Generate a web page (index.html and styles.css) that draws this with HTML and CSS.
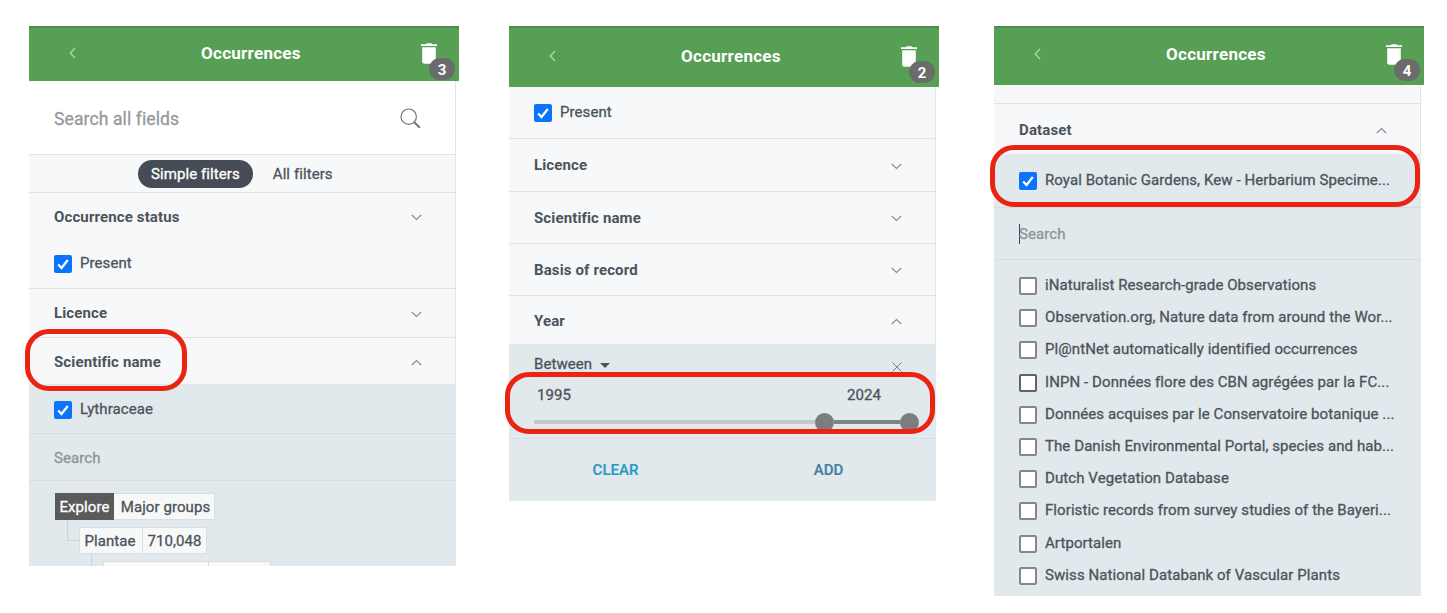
FILE: index.html
```
<!DOCTYPE html>
<html lang="en">
<head>
<meta charset="utf-8">
<title>Occurrences filters</title>
<link rel="stylesheet" href="styles.css">
</head>
<body>
<svg width="0" height="0" class="defs">
  <symbol id="trash" viewBox="0 0 16 21"><path d="M0 1.3h4.6L5.6.2h4.8l1 1.1H16v1.6H0z"/><path d="M1.2 4.3h13.6v14.2c0 1.4-.8 2.2-2.2 2.2H3.4c-1.400 0-2.200-.8-2.200-2.200z"/></symbol>
  <symbol id="back" viewBox="0 0 7 12"><path d="M6 1 1.200 6 6 11"/></symbol>
  <symbol id="down" viewBox="0 0 11 7"><path d="M.8 1l4.700 4.500L10.200 1"/></symbol>
  <symbol id="up" viewBox="0 0 11 7"><path d="M.8 6l4.700-4.500L10.200 6"/></symbol>
  <symbol id="tick" viewBox="0 0 18 18"><path d="M4.200 9.600l3.300 3.400 6.300-8"/></symbol>
</svg>
<main class="board">
  <section class="panel">
    <header class="head head-a">
      <svg class="back"><use href="#back"/></svg><h1 class="title">Occurrences</h1>
      <div class="bin"><svg class="trash"><use href="#trash"/></svg><span class="badge">3</span></div>
    </header>
    <div class="body body-a">
      <div class="search-all"><span class="t">Search all fields</span><svg class="lens" viewBox="0 0 21 21"><circle cx="8.700" cy="8.700" r="7.700"/><path class="handle" d="M14.300 14.300l5.500 5.500"/></svg></div>
      <div class="tabs"><span class="tab on"><span class="t">Simple filters</span></span><span class="tab"><span class="t">All filters</span></span></div>
      <div class="row r-status"><b>Occurrence status</b><svg class="chev"><use href="#down"/></svg></div>
      <div class="row line r-present"><i class="box on"><svg><use href="#tick"/></svg></i><span class="t">Present</span></div>
      <div class="row line r-licence"><b>Licence</b><svg class="chev"><use href="#down"/></svg></div>
      <div class="row r-sci"><b>Scientific name</b><svg class="chev"><use href="#up"/></svg></div>
      <div class="row dark line r-lyth"><i class="box on"><svg><use href="#tick"/></svg></i><span class="t">Lythraceae</span></div>
      <div class="row dark line r-find"><span class="t">Search</span></div>
      <div class="tree dark">
        <div class="node"><span class="cell explore">Explore</span><span class="cell major">Major groups</span></div>
        <div class="branch"><div class="node"><span class="cell plantae">Plantae</span><span class="cell count">710,048</span></div></div>
        <div class="branch deep"><div class="node"><span class="cell blank"></span><span class="cell blank-count"></span></div></div>
      </div>
    </div>
    <div class="ring ring-a"></div>
  </section>

  <section class="panel panel-b">
    <header class="head head-b">
      <svg class="back"><use href="#back"/></svg><h1 class="title">Occurrences</h1>
      <div class="bin"><svg class="trash"><use href="#trash"/></svg><span class="badge">2</span></div>
    </header>
    <div class="body">
      <div class="row line b-present"><i class="box on"><svg><use href="#tick"/></svg></i><span class="t">Present</span></div>
      <div class="row line b-licence"><b>Licence</b><svg class="chev"><use href="#down"/></svg></div>
      <div class="row line b-row"><b>Scientific name</b><svg class="chev"><use href="#down"/></svg></div>
      <div class="row line b-row"><b>Basis of record</b><svg class="chev"><use href="#down"/></svg></div>
      <div class="row b-year"><b>Year</b><svg class="chev"><use href="#up"/></svg></div>
      <div class="range dark line">
        <div class="range-head"><span class="t">Between</span><i class="caret"></i><svg class="close" viewBox="0 0 10 10"><path d="M.5.5l9 9M9.500.5l-9 9"/></svg></div>
        <div class="years"><span class="t">1995</span><span class="t">2024</span></div>
        <div class="slider"><i class="track"></i><i class="knob"></i><i class="fill"></i><i class="knob"></i></div>
      </div>
      <div class="actions dark"><span class="clear">CLEAR</span><span class="add">ADD</span></div>
    </div>
    <div class="ring ring-b"></div>
  </section>

  <section class="panel panel-c">
    <header class="head head-c">
      <svg class="back"><use href="#back"/></svg><h1 class="title">Occurrences</h1>
      <div class="bin"><svg class="trash"><use href="#trash"/></svg><span class="badge">4</span></div>
    </header>
    <div class="body">
      <div class="row line c-gap"></div>
      <div class="row c-data"><b>Dataset</b><svg class="chev"><use href="#up"/></svg></div>
      <div class="row dark line c-kew"><i class="box on"><svg><use href="#tick"/></svg></i><span class="t">Royal Botanic Gardens, Kew - Herbarium Specime...</span></div>
      <div class="row dark line c-find"><i class="cursor"></i><span class="t">Search</span></div>
      <div class="list dark">
        <div class="item"><i class="box"></i><span class="t">iNaturalist Research-grade Observations</span></div>
        <div class="item"><i class="box"></i><span class="t">Observation.org, Nature data from around the Wor...</span></div>
        <div class="item"><i class="box"></i><span class="t">Pl@ntNet automatically identified occurrences</span></div>
        <div class="item"><i class="box strong"></i><span class="t">INPN - Données flore des CBN agrégées par la FC...</span></div>
        <div class="item"><i class="box"></i><span class="t">Données acquises par le Conservatoire botanique ...</span></div>
        <div class="item"><i class="box"></i><span class="t">The Danish Environmental Portal, species and hab...</span></div>
        <div class="item"><i class="box"></i><span class="t">Dutch Vegetation Database</span></div>
        <div class="item"><i class="box"></i><span class="t">Floristic records from survey studies of the Bayeri...</span></div>
        <div class="item"><i class="box"></i><span class="t">Artportalen</span></div>
        <div class="item"><i class="box"></i><span class="t">Swiss National Databank of Vascular Plants</span></div>
      </div>
    </div>
    <div class="ring ring-c"></div>
  </section>
</main>
</body>
</html>
```
FILE: styles.css
```
* { box-sizing: border-box; }
body { margin: 0; background: #fff; color: #4c535a; font: 400 15px/20px Roboto, sans-serif; overflow: hidden; }
svg { display: block; fill: none; }
.defs { position: absolute; }
.board { display: flex; align-items: flex-start; padding: 26px 0 0 29px; }
.panel { position: relative; width: 429.5px; flex: none; }
.panel-b { margin-left: 50.5px; }
.panel-c { margin-left: 55.5px; }
.t { white-space: nowrap; letter-spacing: .08px; -webkit-text-stroke: .3px currentColor; }

.head { display: flex; align-items: center; background: #569f55; border-top: 2px solid #4b8d4d; color: #fff; }
.head-a { height: 55px; padding-bottom: 3px; }
.head-b { height: 61px; padding-bottom: 3px; }
.head-c { height: 59px; padding-bottom: 5px; }
.back { width: 7px; height: 12px; margin-left: 40px; stroke: #b3dcb0; stroke-width: 1.200; }
.title { margin: 0 0 0 125px; width: 220px; font-size: 17px; line-height: 20px; font-weight: 700; letter-spacing: .28px; }
.bin { position: relative; height: 21px; width: 16px; }
.trash { width: 16px; height: 21px; fill: #fff; }
.badge { position: absolute; left: 8px; top: 15px; width: 26px; height: 22px; border-radius: 11px; background: #6b6b6b; text-align: center; font-size: 15px; line-height: 24px; font-weight: 700; }

.body { width: 427px; background: #f6f8fa; border-right: 1px solid #e2e5e8; }
.body-a { height: 485px; overflow: hidden; }
.dark { background: #e1e9ec; width: 427px; }
.search-all { height: 74px; display: flex; align-items: center; justify-content: space-between; padding: 2px 34px 0 25px; background: #fff; border-bottom: 1px solid #dfe3e6; color: #96999c; font-size: 17.600px; }
.lens { width: 21px; height: 21px; stroke: #73777b; stroke-width: 1.200; }
.handle { stroke-width: 2; }
.tabs { height: 38px; display: flex; align-items: center; gap: 20px; padding: 1px 0 0 109px; border-bottom: 1px solid #dfe3e6; }
.tab.on { background: #454c56; color: #fff; border-radius: 14px; height: 28px; padding: 4px 13px; }

.row { display: flex; align-items: center; padding: 0 33px 0 25px; }
.line { border-bottom: 1px solid #dfe3e6; }
.dark.line { border-bottom-color: #d5dde2; }
.row b { font-weight: 700; flex: 1; letter-spacing: .13px; }
.chev { width: 11px; height: 7px; margin-top: 2px; stroke: #8a8f94; stroke-width: 1.200; }
.box { width: 18px; height: 18px; flex: none; margin-right: 8px; background: #fff; border: 2px solid #85868c; border-radius: 2px; position: relative; top: 1px; }
.box.strong { border-color: #606268; }
.box.on { background: #0b74fb; border: 0; }
.box svg { width: 18px; height: 18px; stroke: #fff; stroke-width: 2.200; }
.r-status { height: 47px; }
.r-present { height: 49px; padding-bottom: 2px; }
.r-licence { height: 49px; }
.r-sci { height: 46px; padding-top: 1px; }
.r-lyth { height: 50px; }
.r-find, .c-find { color: #8c9499; }
.r-find { height: 47px; padding-top: 1px; }
.tree { padding: 12px 0 0 26px; height: 90px; }
.node { display: flex; }
.cell { height: 27px; line-height: 26px; border: 1px solid #d8dee1; background: #f7f8f8; text-align: center; letter-spacing: .08px; -webkit-text-stroke: .3px currentColor; }
.explore { width: 59px; background: #5a5a5a; color: #fff; border-color: #5a5a5a; }
.major { width: 101px; border-left: 0; padding-left: 3px; }
.branch { margin: 0 0 0 12px; padding: 7px 0 0 12px; background: linear-gradient(#cbd5d9, #cbd5d9) 0 0 / 1px 20px no-repeat, linear-gradient(#cbd5d9, #cbd5d9) 0 20px / 12px 1px no-repeat; }
.branch.deep { margin-left: 36px; }
.plantae { width: 64px; padding-right: 4px; }
.plantae { padding-right: 2px; }
.count { width: 64px; border-left: 0; }
.blank { width: 106px; }
.blank-count { width: 62px; border-left: 0; }

.b-present { height: 52px; padding-bottom: 1px; }
.b-licence { height: 53px; }
.b-row { height: 52px; }
.b-year { height: 48px; padding-top: 1px; }
.range { height: 95px; padding: 10px 0 0 25px; }
.range-head { display: flex; align-items: center; }
.caret { border: 5px solid transparent; border-top-color: #4c535a; border-bottom: 0; margin: 2px 0 0 8px; }
.close { width: 10px; height: 10px; margin: 5px 34px 0 auto; stroke: #7c8389; stroke-width: 1; }
.years { display: flex; justify-content: space-between; margin-top: 11px; padding: 0 55px 0 3px; }
.slider { display: flex; align-items: center; height: 20px; margin-top: 7px; }
.track { width: 281px; height: 4px; background: #c7c9c9; }
.knob { width: 19px; height: 19px; border-radius: 50%; background: #7d7d7d; }
.fill { width: 66px; height: 4px; background: #7d8486; }
.actions { height: 61.500px; display: flex; align-items: center; font-weight: 500; font-size: 15px; -webkit-text-stroke: .2px currentColor; }
.clear, .add { width: 213px; text-align: center; color: #2a99c5; }
.add { color: #427fa3; }

.c-gap { height: 19px; }
.c-data { height: 50px; padding-top: 1px; }
.c-kew { height: 54px; padding-bottom: 1px; }
.c-find { height: 52px; }
.cursor { width: 1px; height: 20px; background: #3d4449; margin-right: -1px; }
.list { padding: 9px 0 0 25px; height: 336px; }
.item { height: 32.200px; display: flex; align-items: center; }

.ring { position: absolute; border: 5.500px solid #ea2313; border-radius: 24px; height: 62px; }
.ring-a { left: -4px; top: 303px; width: 162px; }
.ring-b { left: -4px; top: 346px; width: 430px; }
.ring-c { left: -4px; top: 119px; width: 430px; }
```
